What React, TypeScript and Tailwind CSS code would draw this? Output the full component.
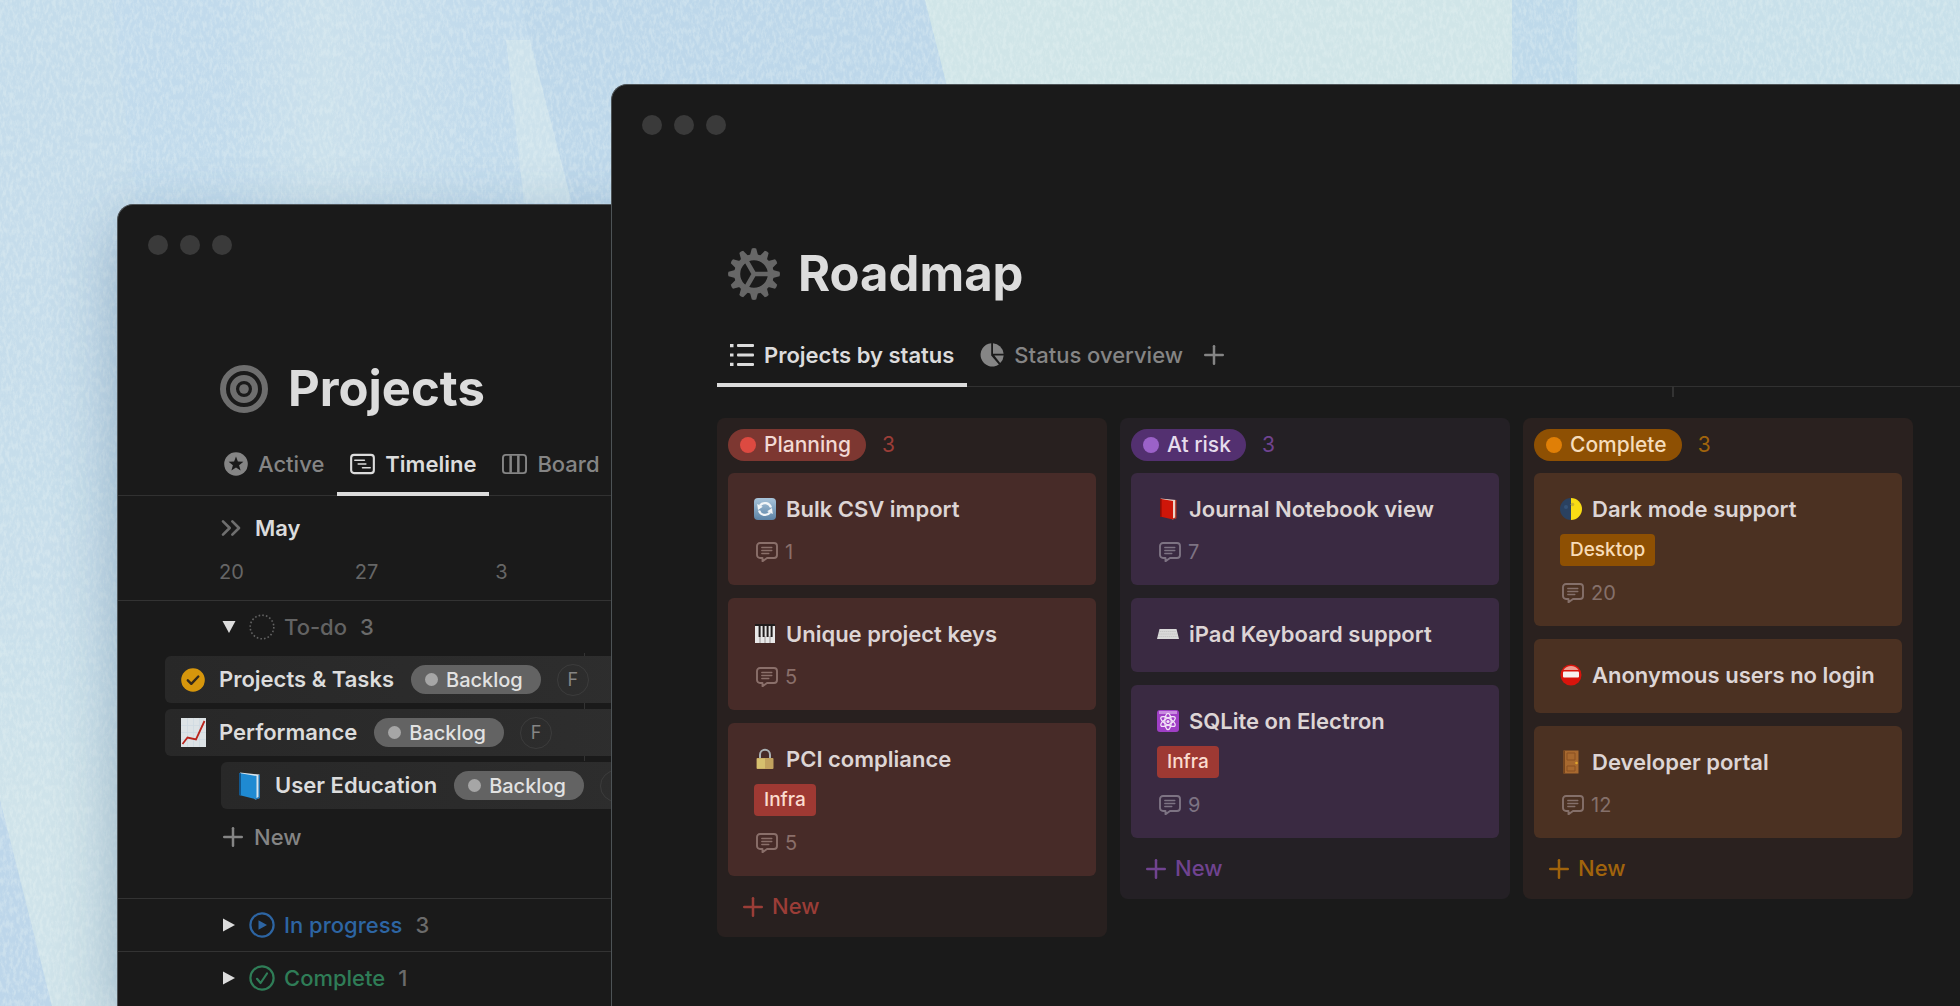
import type { ReactNode } from "react";
import { ChevronsRight, Plus } from "lucide-react";
import clsx from "clsx";

type Tone = "red" | "purple" | "orange";

const tones: Record<Tone, { column: string; card: string; pill: string; dot: string; accent: string; meta: string }> = {
  red: {
    column: "bg-[#28201f]",
    card: "bg-[#472b28]",
    pill: "bg-[#7d3731] text-[#f2d9d4]",
    dot: "bg-[#dd4a41]",
    accent: "text-[#9b3d37]",
    meta: "text-[#8a6f6a]",
  },
  purple: {
    column: "bg-[#242025]",
    card: "bg-[#3a2a42]",
    pill: "bg-[#533070] text-[#e6dcec]",
    dot: "bg-[#9b62c8]",
    accent: "text-[#704390]",
    meta: "text-[#7d7383]",
  },
  orange: {
    column: "bg-[#2a211f]",
    card: "bg-[#4b3122]",
    pill: "bg-[#8e5003] text-[#f5dcbc]",
    dot: "bg-[#e07f06]",
    accent: "text-[#a1640c]",
    meta: "text-[#85706a]",
  },
};

interface CardData {
  icon: ReactNode;
  title: string;
  tag?: string;
  comments?: number;
}

const columns: { name: string; tone: Tone; cards: CardData[] }[] = [
  {
    name: "Planning",
    tone: "red",
    cards: [
      { icon: <SyncIcon />, title: "Bulk CSV import", comments: 1 },
      { icon: <PianoIcon />, title: "Unique project keys", comments: 5 },
      { icon: <LockIcon />, title: "PCI compliance", tag: "Infra", comments: 5 },
    ],
  },
  {
    name: "At risk",
    tone: "purple",
    cards: [
      { icon: <RedBookIcon />, title: "Journal Notebook view", comments: 7 },
      { icon: <KeyboardIcon />, title: "iPad Keyboard support" },
      { icon: <AtomIcon />, title: "SQLite on Electron", tag: "Infra", comments: 9 },
    ],
  },
  {
    name: "Complete",
    tone: "orange",
    cards: [
      { icon: <MoonIcon />, title: "Dark mode support", tag: "Desktop", comments: 20 },
      { icon: <NoEntryIcon />, title: "Anonymous users no login" },
      { icon: <DoorIcon />, title: "Developer portal", comments: 12 },
    ],
  },
];

const tagColors: Record<string, string> = {
  Infra: "bg-[#9e3933] text-[#fbdccf]",
  Desktop: "bg-[#8e5003] text-[#f8dcb8]",
};

const tasks = [
  { icon: <CheckBadgeIcon />, title: "Projects & Tasks", nested: false },
  { icon: <ChartIcon />, title: "Performance", nested: false },
  { icon: <BlueBookIcon />, title: "User Education", nested: true },
];

export default function App() {
  return (
    <main className="relative h-screen min-h-[600px] w-full overflow-hidden bg-[#c3dbec] font-['Inter','Liberation_Sans',sans-serif] text-[#dcdcdc]">
      <Backdrop />
      <ProjectsWindow />
      <RoadmapWindow />
    </main>
  );
}

function ProjectsWindow() {
  return (
    <section className="absolute top-[204px] right-0 bottom-0 left-[117px] overflow-hidden rounded-tl-2xl border-t border-l border-[#50565a] bg-[#1a1a1a] shadow-[0_20px_60px_rgba(40,80,120,0.35)]">
      <div className="px-[30px] pt-[30px]">
        <WindowDots />
      </div>
      <header className="mt-[104px] flex h-[60px] items-center gap-5 pl-[102px]">
        <TargetIcon />
        <h1 className="text-[49px] leading-[60px] font-bold">Projects</h1>
      </header>
      <nav className="mt-[17px] flex border-b border-[#313131] pl-[93px]">
        <Tab icon={<StarIcon />} label="Active" />
        <Tab icon={<TimelineIcon />} label="Timeline" active />
        <Tab icon={<BoardIcon />} label="Board" />
      </nav>

      <div className="border-b border-[#333333] pt-4 pb-[14px]">
        <div className="flex h-8 items-center gap-2 pl-[97px]">
          <ChevronsRight className="size-8 text-[#6f6f6f]" strokeWidth={2} />
          <h2 className="text-[22px] font-semibold">May</h2>
        </div>
        <div className="mt-[14px] flex h-7 items-center pl-[46px] text-xl text-[#666666]">
          <span className="w-[135px] text-center">20</span>
          <span className="w-[135px] text-center">27</span>
          <span className="w-[135px] text-center">3</span>
        </div>
      </div>

      <div className="relative pb-[33px]">
        <div className="absolute top-[52px] left-[466px] h-[108px] w-px bg-[#333333]" />
        <GroupHeader open icon={<TodoIcon />} label="To-do" count={3} color="text-[#636363]" />
        <ul className="relative mt-[3px] flex flex-col gap-[6px]">
          {tasks.map((task) => (
            <li
              key={task.title}
              className={clsx(
                "flex h-[47px] items-center rounded-l-md bg-linear-to-r from-[#282828] to-[#2e2e2e] to-[480px] pl-[15px]",
                task.nested ? "ml-[103px]" : "ml-[47px]",
              )}
            >
              <span className="flex w-[26px] justify-center">{task.icon}</span>
              <span className="ml-[13px] text-[22px] font-semibold">{task.title}</span>
              <span className="ml-[17px] flex h-[29px] items-center gap-2 rounded-full bg-[#636363] pr-[18px] pl-[14px] text-xl font-medium text-[#e2e2e2]">
                <span className="size-[13px] rounded-full bg-[#a6a6a6]" />
                Backlog
              </span>
              <span className="ml-4 flex size-8 items-center justify-center rounded-full border border-[#3c3c3c] text-lg text-[#858585]">
                F
              </span>
            </li>
          ))}
        </ul>
        <button type="button" className="ml-[100px] flex h-14 items-center gap-1.5 text-[22px] font-medium text-[#858585]">
          <Plus className="size-[30px]" strokeWidth={2} />
          New
        </button>
      </div>

      <div className="border-t border-[#333333]">
        <GroupHeader icon={<ProgressIcon />} label="In progress" count={3} color="text-[#2d65a3]" />
      </div>
      <div className="border-t border-[#333333]">
        <GroupHeader icon={<DoneIcon />} label="Complete" count={1} color="text-[#2f7d57]" />
      </div>
    </section>
  );
}

function RoadmapWindow() {
  return (
    <section className="absolute top-[84px] right-0 bottom-0 left-[611px] overflow-hidden rounded-tl-2xl border-t border-l border-[#4d5356] bg-[#1a1a1a]">
      <div className="px-[30px] pt-[30px]">
        <WindowDots />
      </div>
      <header className="mt-[109px] flex h-[60px] items-center gap-[18px] pl-[116px]">
        <GearIcon />
        <h1 className="text-[49px] leading-[60px] font-bold">Roadmap</h1>
      </header>
      <nav className="relative mt-[23px] ml-[105px] flex border-b border-[#313131]">
        <Tab icon={<ListIcon />} label="Projects by status" active />
        <Tab icon={<PieIcon />} label="Status overview" />
        <button type="button" aria-label="Add view" className="px-[3px] pb-1 text-[#858585]">
          <Plus className="size-[30px]" strokeWidth={2} />
        </button>
        <div className="absolute top-full left-[955px] h-[11px] w-[2px] bg-[#333333]" />
      </nav>
      <div className="mt-[31px] ml-[105px] flex items-start gap-[13px]">
        {columns.map((column) => (
          <BoardColumn key={column.name} {...column} />
        ))}
      </div>
    </section>
  );
}

function BoardColumn({ name, tone, cards }: { name: string; tone: Tone; cards: CardData[] }) {
  const t = tones[tone];
  return (
    <section className={clsx("w-[390px] shrink-0 rounded-lg px-[11px] pt-[11px]", t.column)}>
      <header className="flex h-8 items-center gap-4">
        <h2 className={clsx("flex h-8 items-center gap-2 rounded-full pr-[15px] pl-3 text-[21px] font-medium", t.pill)}>
          <span className={clsx("size-4 rounded-full", t.dot)} />
          {name}
        </h2>
        <span className={clsx("text-[21px]", t.accent)}>{cards.length}</span>
      </header>
      <div className="mt-3 flex flex-col gap-[13px]">
        {cards.map((card) => (
          <article key={card.title} className={clsx("rounded-md px-[26px] pt-5 pb-[22px]", t.card)}>
            <h3 className="flex h-8 items-center gap-[10px] text-[22px] font-semibold whitespace-nowrap text-[#ddd5d5]">
              <span className="flex w-[22px] justify-center">{card.icon}</span>
              {card.title}
            </h3>
            {card.tag && (
              <span className={clsx("mt-[9px] flex h-8 w-fit items-center rounded px-[10px] text-[19px] font-medium", tagColors[card.tag])}>
                {card.tag}
              </span>
            )}
            {card.comments && (
              <div className={clsx("mt-4 flex h-[22px] items-center gap-[7px] pl-[2px] text-xl", t.meta)}>
                <CommentIcon />
                {card.comments}
              </div>
            )}
          </article>
        ))}
      </div>
      <button type="button" className={clsx("flex h-[61px] items-center gap-1 pl-[10px] text-[22px] font-medium", t.accent)}>
        <Plus className="size-[30px]" strokeWidth={2} />
        New
      </button>
    </section>
  );
}

function WindowDots() {
  return (
    <div className="flex gap-3">
      <span className="size-5 rounded-full bg-[#3a3a3a]" />
      <span className="size-5 rounded-full bg-[#3a3a3a]" />
      <span className="size-5 rounded-full bg-[#3a3a3a]" />
    </div>
  );
}

function Tab({ icon, label, active }: { icon: ReactNode; label: string; active?: boolean }) {
  return (
    <button
      type="button"
      className={clsx(
        "-mb-px flex h-[60px] items-center gap-[10px] border-b-4 px-[13px] text-[22px] whitespace-nowrap",
        active ? "border-[#dcdcdc] font-semibold text-[#dcdcdc]" : "border-transparent font-medium text-[#858585]",
      )}
    >
      {icon}
      {label}
    </button>
  );
}

function GroupHeader(props: { open?: boolean; icon: ReactNode; label: string; count: number; color: string }) {
  return (
    <button
      type="button"
      aria-expanded={!!props.open}
      className={clsx("flex h-[52px] items-center pl-[104px] text-[22px] font-medium", props.color)}
    >
      <svg viewBox="0 0 14 14" className={clsx("size-[14px] text-[#dcdcdc]", props.open && "rotate-90")} fill="currentColor">
        <path d="M1 0.5 13 7 1 13.5Z" />
      </svg>
      <span className="ml-[13px]">{props.icon}</span>
      <span className="ml-[9px]">{props.label}</span>
      <span className="ml-[13px] text-[#6b6b6b]">{props.count}</span>
    </button>
  );
}

/* Brushed paper behind the windows */
function Backdrop() {
  return (
    <svg className="absolute inset-0 h-full w-full" viewBox="0 0 1960 1006" preserveAspectRatio="none" aria-hidden="true">
      <defs>
        <linearGradient id="wash" x1="0" y1="0" x2="0" y2="1">
          <stop offset="0" stopColor="#c1daec" />
          <stop offset="0.45" stopColor="#c3dcec" />
          <stop offset="0.8" stopColor="#cfe3ea" />
          <stop offset="1" stopColor="#cfe3ea" />
        </linearGradient>
        <linearGradient id="streak" x1="0" y1="0" x2="1" y2="0">
          <stop offset="0" stopColor="#cfe3ec" stopOpacity="0" />
          <stop offset="0.4" stopColor="#cfe3ec" stopOpacity="0.7" />
          <stop offset="1" stopColor="#cfe3ec" stopOpacity="0" />
        </linearGradient>
        <filter id="grain" x="0" y="0" width="100%" height="100%">
          <feTurbulence type="fractalNoise" baseFrequency="0.3 0.14" numOctaves="4" seed="7" />
          <feColorMatrix values="0 0 0 0 0.85  0 0 0 0 0.93  0 0 0 0 0.92  3 0 0 0 -1.2" />
        </filter>
      </defs>
      <rect width="1960" height="1006" fill="url(#wash)" />
      <path d="M0 0H112L136 203 116 640H0Z" fill="#cbe0ec" opacity="0.35" />
      <path d="M220 0H480V203H220Z" fill="url(#streak)" />
      <path d="M506 40 530 40 572 203 524 203Z" fill="#cfe3ec" opacity="0.8" />
      <path d="M520 0H925L948 90V203H572L530 40Z" fill="#bcd6ea" opacity="0.8" />
      <path d="M925 0H1512V90H948Z" fill="#d0e5e8" />
      <path d="M1512 0h65V90h-65Z" fill="#bed9ea" />
      <path d="M1577 0H1960V90H1577Z" fill="#c8e0ea" />
      <path d="M0 800 52 1006H0Z" fill="#bdd6ea" />
      <rect width="1960" height="1006" filter="url(#grain)" opacity="0.3" />
    </svg>
  );
}

function TargetIcon() {
  return (
    <svg viewBox="0 0 48 48" className="size-12 shrink-0 text-[#6e6e6e]" fill="none" stroke="currentColor" strokeWidth="6">
      <circle cx="24" cy="24" r="21" />
      <circle cx="24" cy="24" r="11" />
      <circle cx="24" cy="24" r="4.8" fill="currentColor" stroke="none" />
    </svg>
  );
}

function GearIcon() {
  return (
    <svg viewBox="-26 -26 52 52" className="size-[52px] shrink-0 text-[#676767]" fill="currentColor">
      {[0, 30, 60, 90, 120, 150, 180, 210, 240, 270, 300, 330].map((angle) => (
        <path key={angle} d="M-4.2 -18 -2.2 -25.5Q0 -26.4 2.2 -25.5L4.2 -18Z" transform={`rotate(${angle})`} />
      ))}
      <circle r="16.8" fill="none" stroke="currentColor" strokeWidth="6" />
      <path d="M0 0H16M0 0-8 -13.9M0 0-8 13.9" stroke="currentColor" strokeWidth="4.6" />
    </svg>
  );
}

function StarIcon() {
  return (
    <svg viewBox="0 0 24 24" className="size-6 shrink-0">
      <circle cx="12" cy="12" r="11.8" fill="currentColor" />
      <path d="m12 4.4 1.9 5.2 5.5.2-4.3 3.4 1.5 5.3-4.6-3.1-4.6 3.1 1.5-5.3-4.3-3.4 5.5-.2Z" fill="#1a1a1a" />
    </svg>
  );
}

function TimelineIcon() {
  return (
    <svg viewBox="0 0 26 24" className="h-6 w-[25px] shrink-0" fill="none" stroke="currentColor" strokeLinecap="round">
      <rect x="1.2" y="2.5" width="23.6" height="19" rx="3" strokeWidth="2.2" />
      <path d="M5 8h10M8.5 12h8M13 16h8" strokeWidth="1.6" />
    </svg>
  );
}

function BoardIcon() {
  return (
    <svg viewBox="0 0 26 24" className="h-6 w-[25px] shrink-0" fill="none" stroke="currentColor" strokeWidth="2">
      <rect x="1" y="2.5" width="24" height="19" rx="3" />
      <path d="M9 3v18M17 3v18" strokeWidth="2.6" />
    </svg>
  );
}

function ListIcon() {
  return (
    <svg viewBox="0 0 24 24" className="size-6 shrink-0" fill="currentColor">
      <path d="M0 1h3.5v3.2H0zM0 10.4h3.5v3.2H0zM0 19.8h3.5V23H0z" />
      <rect x="7" y="1.1" width="17" height="3" rx="1" />
      <rect x="7" y="10.5" width="17" height="3" rx="1" />
      <rect x="7" y="19.9" width="17" height="3" rx="1" />
    </svg>
  );
}

function PieIcon() {
  return (
    <svg viewBox="0 0 24 24" className="size-6 shrink-0" fill="currentColor">
      <path d="M11.2.2v12.3l7.7 9A11.7 11.7 0 1 1 11.2.2Z" />
      <path d="M13 .3A11.7 11.7 0 0 1 23.6 10.7H13Z" />
      <path d="M14.3 12.5h9.4a11.7 11.7 0 0 1-3.5 7.6Z" />
    </svg>
  );
}

function CommentIcon() {
  return (
    <svg viewBox="0 0 22 20" className="h-5 w-[22px]" fill="none" stroke="currentColor" strokeLinecap="round" strokeLinejoin="round">
      <path d="M4 1h14a3 3 0 0 1 3 3v9a3 3 0 0 1-3 3h-7l-4.5 3.3V16H4a3 3 0 0 1-3-3V4a3 3 0 0 1 3-3Z" strokeWidth="1.9" />
      <path d="M5.8 5.5h10M5.8 8.5h10M5.8 11.5h7" strokeWidth="1.4" />
    </svg>
  );
}

function TodoIcon() {
  return (
    <svg viewBox="0 0 26 26" className="size-[26px]" fill="none" stroke="currentColor">
      <circle cx="13" cy="13" r="11.8" strokeWidth="1.6" strokeDasharray="1.6 2.1" />
    </svg>
  );
}

function ProgressIcon() {
  return (
    <svg viewBox="0 0 26 26" className="size-[26px]">
      <circle cx="13" cy="13" r="11.6" fill="none" stroke="currentColor" strokeWidth="2.2" />
      <path d="M9.5 8.2 18 13 9.5 17.8Z" fill="currentColor" />
    </svg>
  );
}

function DoneIcon() {
  return (
    <svg viewBox="0 0 26 26" className="size-[26px]" fill="none" stroke="currentColor" strokeWidth="2.2">
      <circle cx="13" cy="13" r="11.6" />
      <path d="m8 13.8 3.6 4.2L18 8.5" strokeLinecap="round" strokeLinejoin="round" />
    </svg>
  );
}

function CheckBadgeIcon() {
  return (
    <svg viewBox="0 0 24 24" className="size-6">
      <circle cx="12" cy="12" r="11.8" fill="#d6960c" />
      <path d="m6.8 12.3 3.5 3.5 7-7.3" fill="none" stroke="#33281a" strokeWidth="2.4" strokeLinecap="round" strokeLinejoin="round" />
    </svg>
  );
}

function ChartIcon() {
  return (
    <svg viewBox="0 0 25 29" className="h-[29px] w-[25px]">
      <path d="M0 0h25v29H0z" fill="#dde3e6" />
      <path d="M0 7.5h25M0 14.5h25M0 21.5h25M6.5 0v29M12.5 0v29M18.5 0v29" stroke="#cfdbe2" strokeWidth="0.8" />
      <path d="m1.5 26 5-6.5 8.5 2L23.5 3" fill="none" stroke="#b9241c" strokeWidth="1.8" />
    </svg>
  );
}

function BlueBookIcon() {
  return (
    <svg viewBox="0 0 22 28" className="h-7 w-[22px]">
      <path d="M2 0.5 21.5 2.5v23.5L17 27.5Z" fill="#d8e4ec" />
      <path d="M1 1 18.5 4v23.5L1 23Z" fill="#1f8ad2" />
      <path d="M1 1 3 1.4v22.1L1 23Z" fill="#12568c" />
      <path d="M20.5 3h1.5v23l-4.5 1.8v-1.3l3-1.5Z" fill="#1c6fae" />
    </svg>
  );
}

function RedBookIcon() {
  return (
    <svg viewBox="0 0 18 22" className="h-[22px] w-[18px]">
      <path d="M1.5 0.5 17 2v18L13.5 21.5Z" fill="#ecd3c8" />
      <path d="M1 0.8 14 3v18.5L1 18.5Z" fill="#cf1609" />
      <path d="M1 0.8 2.6 1.1v17.8L1 18.5Z" fill="#8c0f08" />
      <path d="M16.2 2h1.3v18.2l-3.7 1.4v-1.2l2.4-1Z" fill="#b02a18" />
    </svg>
  );
}

function SyncIcon() {
  return (
    <svg viewBox="0 0 22 22" className="size-[22px]">
      <defs>
        <linearGradient id="sync" x1="0" y1="0" x2="0" y2="1">
          <stop offset="0" stopColor="#a8c4da" />
          <stop offset="1" stopColor="#5c83a6" />
        </linearGradient>
      </defs>
      <rect width="22" height="22" rx="4" fill="url(#sync)" />
      <g fill="none" stroke="#f2f5f7" strokeWidth="2.2">
        <path d="M17 9.5A6.3 6.3 0 0 0 6 7.5" />
        <path d="M5 12.5a6.3 6.3 0 0 0 11 2" />
      </g>
      <path d="M3.2 6 4 12l4.8-3.2ZM18.8 16 18 10l-4.8 3.2Z" fill="#f2f5f7" />
    </svg>
  );
}

function PianoIcon() {
  return (
    <svg viewBox="0 0 22 20" className="h-5 w-[22px]">
      <path d="M1 1h20v18H1z" fill="#e8e8e8" />
      <path d="M1 0h20v2H1z" fill="#201c1c" />
      <path d="M6 12v7M11 12v7M16 12v7" stroke="#8b8484" strokeWidth="0.8" />
      <path d="M4.6 2h2v11h-2zM8.6 2h2v11h-2zM12.6 2h2v11h-2zM16.6 2h2v11h-2z" fill="#201c1c" />
    </svg>
  );
}

function LockIcon() {
  return (
    <svg viewBox="0 0 18 22" className="h-[22px] w-[18px]">
      <path d="M4 11V6.8a5 5 0 0 1 10 0V11" fill="none" stroke="#a9b0b3" strokeWidth="2" />
      <rect x="0.5" y="10" width="17" height="11" rx="1" fill="#c2a25e" />
      <path d="M1 10.5h8v10H1z" fill="#d6c06e" />
    </svg>
  );
}

function KeyboardIcon() {
  return (
    <svg viewBox="0 0 22 12" className="h-3 w-[22px]">
      <path d="M2.500 1h17L22 11H0Z" fill="#d9d9d9" />
      <path d="M2.600 3.5h16.8M2 6h18M1.3 8.5h19.4" stroke="#bdbdbd" strokeWidth="0.7" strokeDasharray="1.5 0.6" />
    </svg>
  );
}

function AtomIcon() {
  return (
    <svg viewBox="0 0 22 22" className="size-[22px]">
      <rect width="22" height="22" rx="3" fill="#a03fc6" />
      <path d="M2 1h18v3H2z" fill="#c98be0" />
      <g fill="none" stroke="#f3e3f8" strokeWidth="1.3">
        <ellipse cx="11" cy="11.5" rx="3.2" ry="8.2" />
        <ellipse cx="11" cy="11.5" rx="3.2" ry="8.2" transform="rotate(60 11 11.5)" />
        <ellipse cx="11" cy="11.5" rx="3.2" ry="8.2" transform="rotate(120 11 11.5)" />
      </g>
      <circle cx="11" cy="11.5" r="1.6" fill="#f3e3f8" />
    </svg>
  );
}

function MoonIcon() {
  return (
    <svg viewBox="0 0 22 22" className="size-[22px]">
      <path d="M11 0a11 11 0 0 0 0 22Z" fill="#2a4160" />
      <path d="M11 0a11 11 0 0 1 0 22Z" fill="#f8dc14" />
      <circle cx="12.5" cy="6.5" r="1.8" fill="#cdb52b" />
      <circle cx="6" cy="9" r="2" fill="#355276" />
    </svg>
  );
}

function NoEntryIcon() {
  return (
    <svg viewBox="0 0 22 22" className="size-[22px]">
      <circle cx="11" cy="11" r="10.5" fill="#d9140c" />
      <path d="M3.5 6a9 9 0 0 1 15 0Z" fill="#ef9d92" />
      <rect x="3" y="7.5" width="16" height="6" rx="1" fill="#f7f1ef" />
    </svg>
  );
}

function DoorIcon() {
  return (
    <svg viewBox="0 0 16 24" className="h-6 w-4">
      <path d="M0.5 0.5h15v23H0.5z" fill="#a8692f" />
      <path d="M0.5 0.5H2v23H0.5z" fill="#77451c" />
      <path d="M4 3h8v7H4zM4 16h8v5H4z" fill="none" stroke="#8a5122" />
      <circle cx="13.5" cy="13" r="1.3" fill="#e0a52c" />
    </svg>
  );
}
